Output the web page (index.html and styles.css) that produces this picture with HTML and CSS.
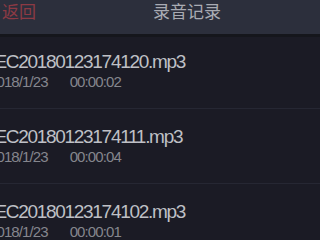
FILE: index.html
```html
<!DOCTYPE html>
<html>
<head>
<meta charset="utf-8">
<link rel="stylesheet" href="styles.css">
</head>
<body>
<div class="header">
  <span class="back">返回</span>
  <span class="title">录音记录</span>
</div>
<div class="shadow"></div>
<ul class="list">
  <li class="row">
    <div class="name">REC20180123174120.mp3</div>
    <div class="meta"><span class="date">2018/1/23</span><span class="dur">00:00:02</span></div>
  </li>
  <li class="row">
    <div class="name">REC20180123174111.mp3</div>
    <div class="meta"><span class="date">2018/1/23</span><span class="dur">00:00:04</span></div>
  </li>
  <li class="row">
    <div class="name">REC20180123174102.mp3</div>
    <div class="meta"><span class="date">2018/1/23</span><span class="dur">00:00:01</span></div>
  </li>
</ul>
</body>
</html>
```
FILE: styles.css
```css
html, body {
  margin: 0;
  padding: 0;
  width: 320px;
  height: 240px;
  overflow: hidden;
  background: #1b1b25;
  font-family: "Liberation Sans", Arial, "Noto Sans CJK SC", sans-serif;
}
.header {
  height: 34px;
  background: #2c2f3c;
  display: flex;
  align-items: flex-start;
  font-family: "Noto Sans CJK SC", sans-serif;
  font-size: 17px;
  line-height: 21px;
}
.back {
  margin-left: 2px;
  color: #8c3a44;
}
.title {
  margin-left: 117px;
  color: #a9abb3;
}
.shadow {
  height: 3px;
  background: #15161c;
}
.list {
  list-style: none;
  margin: 0 0 0 -18px;
  padding: 0;
}
.row {
  height: 75px;
  padding-top: 18px;
  box-sizing: border-box;
  border-bottom: 1px solid #262733;
}
.row:first-child {
  height: 72px;
  padding-top: 15px;
}
.row:last-child {
  height: auto;
  border-bottom: 0;
}
.name {
  font-size: 19px;
  line-height: 20px;
  letter-spacing: -1.3px;
  color: #bfc0c6;
}
.meta {
  display: flex;
  margin-top: 1px;
  padding-left: 7px;
  font-size: 15px;
  line-height: 17px;
  letter-spacing: -0.9px;
  color: #85868d;
}
.dur {
  margin-left: 22px;
}
```
